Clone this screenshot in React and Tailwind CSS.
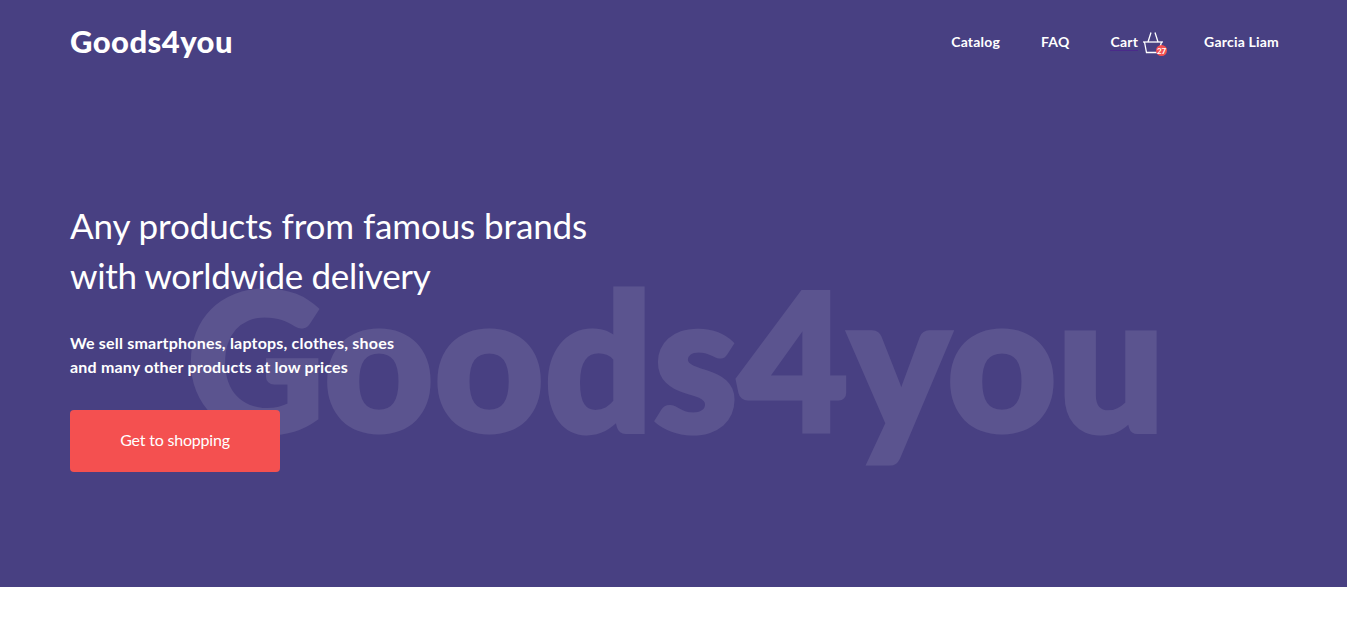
export default function App() {
  const font = { fontFamily: 'Lato, "Noto Sans", sans-serif' };
  return (
    <div style={font} className="min-h-[622px] bg-white">
      <section className="relative h-[587px] overflow-hidden bg-[#484082] text-white">
        <div aria-hidden="true" className="absolute left-[187px] top-[227px] whitespace-nowrap text-[190px] leading-[260px] font-black tracking-[0.5px] text-white opacity-10 [-webkit-text-stroke:5px_white]">Goods4you</div>
        <header className="relative flex h-[84px] items-center justify-between pl-[70px] pr-[68px]">
          <a className="text-[31px] font-black leading-none tracking-[0.45px] -mt-[2px]">Goods4you</a>
          <nav className="flex items-center text-sm font-bold tracking-[0.2px]">
            <a>Catalog</a>
            <a className="ml-[41px]">FAQ</a>
            <a className="ml-[41px] flex items-center">
              <span className="border-b border-[#4a2a8a] leading-[17px]">Cart</span>
              <span className="relative ml-[5px] h-[24px] w-[24px]">
                <svg width="24" height="24" viewBox="0 0 24 24" fill="none" stroke="currentColor" strokeWidth="1.3" className="absolute left-0 top-[1px]">
                  <path d="M0 11H20" />
                  <path d="M1.5 11L3.5 21.5H15.5L18.5 11" />
                  <path d="M5 11L8 1.5M15 11L12 1.5" />
                </svg>
                <span className="absolute left-[13px] top-[15px] flex h-[11px] w-[11px] items-center justify-center rounded-full bg-[#f45050] text-[8px] font-bold leading-none tracking-normal">27</span>
              </span>
            </a>
            <a className="ml-[37px]">Garcia Liam</a>
          </nav>
        </header>
        <div className="relative px-[70px] pt-[118px]">
          <h1 className="text-[35px] font-normal leading-[50px] -mt-[2px]">
            <span className="tracking-[-0.1px]">Any products from famous brands</span><br />
            <span className="tracking-[-0.35px]">with worldwide delivery</span>
          </h1>
          <p className="mt-[31px] text-base font-bold leading-6 tracking-[0.2px]">We sell smartphones, laptops, clothes, shoes<br />and many other products at low prices</p>
          <button className="mt-[31px] h-[62px] w-[210px] rounded bg-[#f45050] pb-[2px] text-base tracking-[-0.2px] text-white">Get to shopping</button>
        </div>
      </section>
    </div>
  );
}
